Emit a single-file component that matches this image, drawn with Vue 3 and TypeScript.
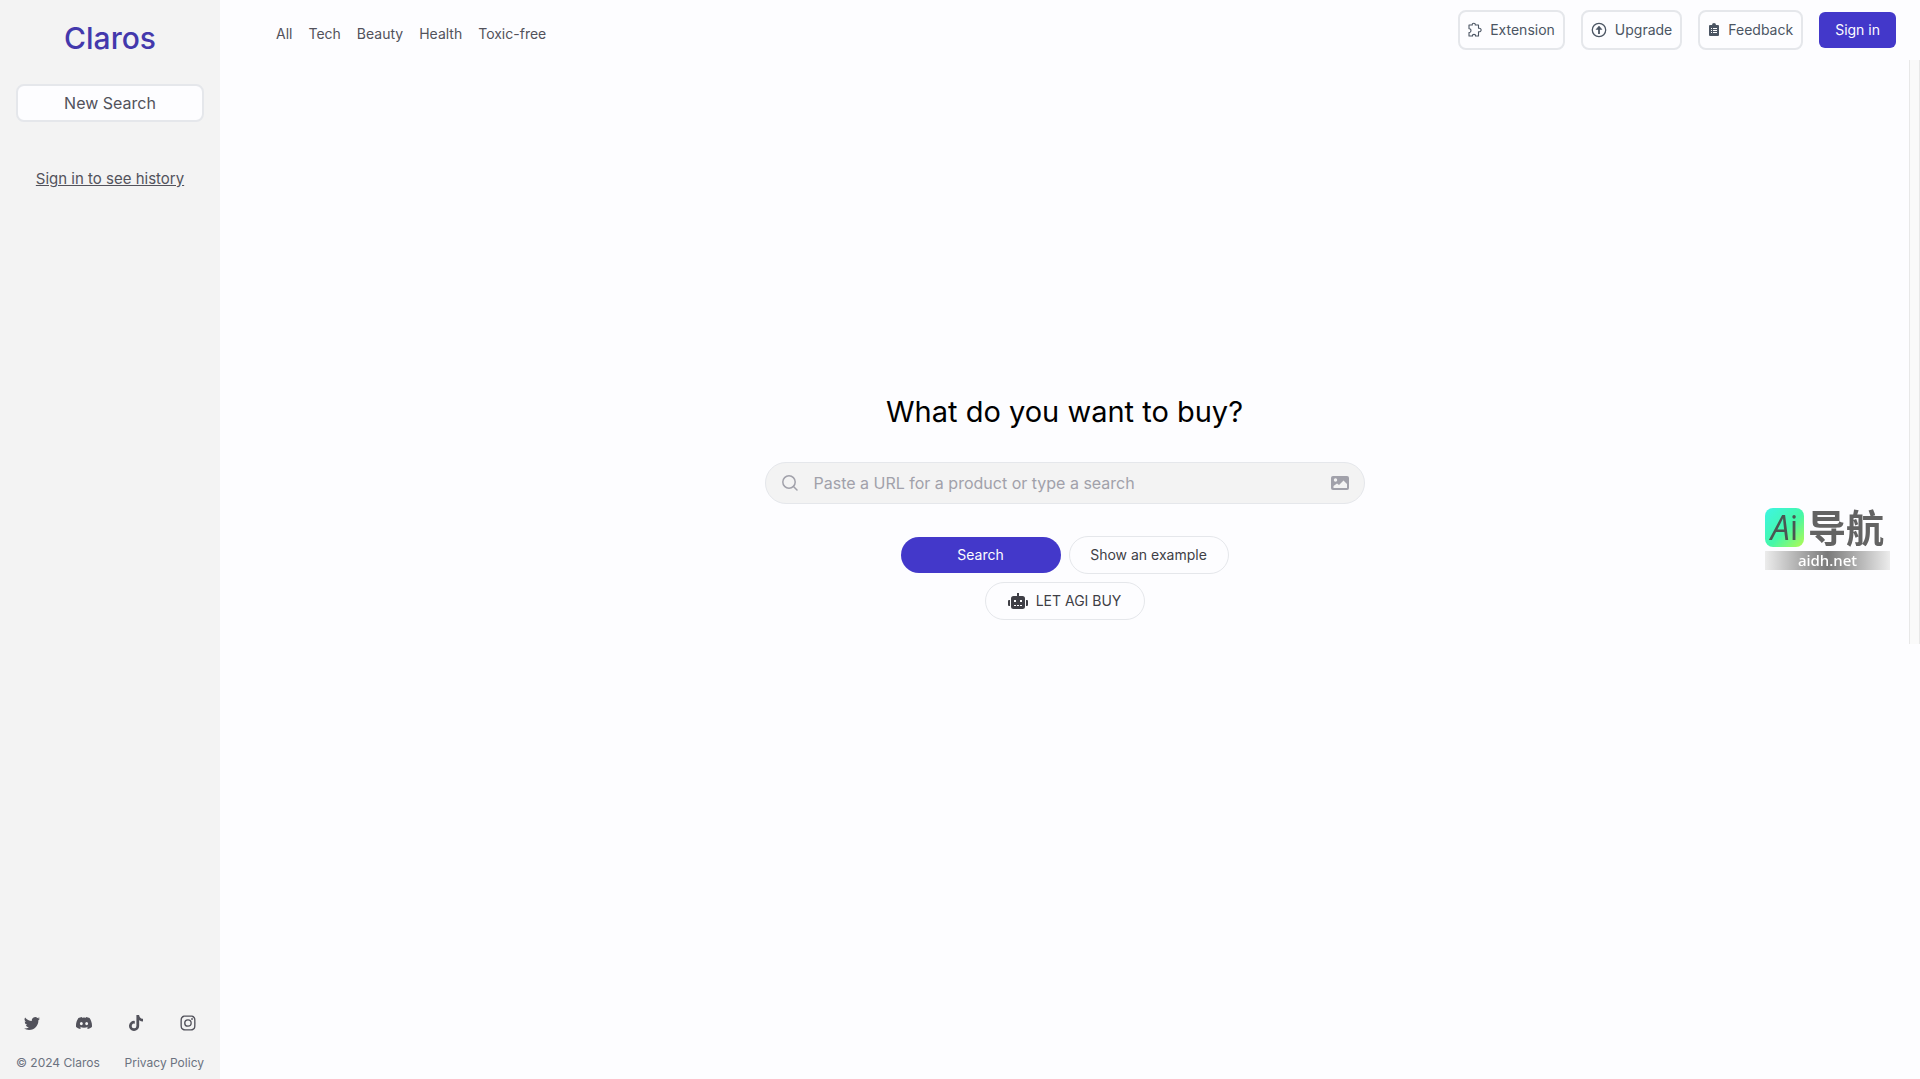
<script setup lang="ts">
import { ref } from 'vue'

const query = ref('')
const categories: string[] = ['All', 'Tech', 'Beauty', 'Health', 'Toxic-free']

interface Social {
  name: string
  box: string
  path: string
}

const socials: Social[] = [
  {
    name: 'Twitter',
    box: '0 0 16 16',
    path: 'M5.026 15c6.038 0 9.341-5.003 9.341-9.334 0-.14 0-.282-.006-.422A6.685 6.685 0 0 0 16 3.542a6.658 6.658 0 0 1-1.889.518 3.301 3.301 0 0 0 1.447-1.817 6.533 6.533 0 0 1-2.087.793A3.286 3.286 0 0 0 7.875 6.03a9.325 9.325 0 0 1-6.767-3.429 3.289 3.289 0 0 0 1.018 4.382A3.323 3.323 0 0 1 .64 6.575v.045a3.288 3.288 0 0 0 2.632 3.218 3.203 3.203 0 0 1-.865.115 3.23 3.23 0 0 1-.614-.057 3.283 3.283 0 0 0 3.067 2.277A6.588 6.588 0 0 1 .78 13.58a6.32 6.32 0 0 1-.78-.045A9.344 9.344 0 0 0 5.026 15z',
  },
  {
    name: 'Discord',
    box: '0 0 16 16',
    path: 'M13.545 2.907a13.227 13.227 0 0 0-3.257-1.011.05.05 0 0 0-.052.025c-.141.25-.297.577-.406.833a12.19 12.19 0 0 0-3.658 0 8.258 8.258 0 0 0-.412-.833.051.051 0 0 0-.052-.025c-1.125.194-2.22.534-3.257 1.011a.041.041 0 0 0-.021.018C.356 6.024-.213 9.047.066 12.032c.001.014.01.028.021.037a13.276 13.276 0 0 0 3.995 2.02.05.05 0 0 0 .056-.019c.308-.42.582-.863.818-1.329a.05.05 0 0 0-.028-.07 8.735 8.735 0 0 1-1.248-.595.05.05 0 0 1-.005-.083c.084-.063.168-.129.248-.195a.05.05 0 0 1 .051-.007c2.619 1.196 5.454 1.196 8.041 0a.052.052 0 0 1 .053.007c.08.066.164.132.248.195a.051.051 0 0 1-.004.085 8.254 8.254 0 0 1-1.249.594.05.05 0 0 0-.027.07c.24.465.515.909.817 1.329a.05.05 0 0 0 .056.019 13.235 13.235 0 0 0 4.001-2.02.049.049 0 0 0 .021-.037c.334-3.451-.559-6.449-2.366-9.106a.034.034 0 0 0-.02-.019zM5.347 10.214c-.789 0-1.438-.724-1.438-1.612 0-.889.637-1.613 1.438-1.613.807 0 1.45.73 1.438 1.613 0 .888-.637 1.612-1.438 1.612zm5.316 0c-.788 0-1.438-.724-1.438-1.612 0-.889.637-1.613 1.438-1.613.807 0 1.451.73 1.438 1.613 0 .888-.631 1.612-1.438 1.612z',
  },
  {
    name: 'TikTok',
    box: '0 0 448 512',
    path: 'M448 209.9a210.1 210.1 0 0 1-122.8-39.3v178.8A162.6 162.6 0 1 1 185 188.3v89.9a74.6 74.6 0 1 0 52.2 71.2V0h88a121.2 121.2 0 0 0 1.9 22.2 122.2 122.2 0 0 0 53.9 80.2 121.4 121.4 0 0 0 67 20.1z',
  },
  {
    name: 'Instagram',
    box: '-0.5 -0.5 17 17',
    path: 'M8 0C5.829 0 5.556.01 4.703.048 3.85.088 3.269.222 2.76.42a3.917 3.917 0 0 0-1.417.923A3.927 3.927 0 0 0 .42 2.76C.222 3.268.087 3.85.048 4.7.01 5.555 0 5.827 0 8.001c0 2.172.01 2.444.048 3.297.04.852.174 1.433.372 1.942.205.526.478.972.923 1.417.444.445.89.719 1.416.923.51.198 1.09.333 1.942.372C5.555 15.99 5.827 16 8 16s2.444-.01 3.298-.048c.851-.04 1.434-.174 1.943-.372a3.916 3.916 0 0 0 1.416-.923c.445-.445.718-.891.923-1.417.197-.509.332-1.09.372-1.942C15.99 10.445 16 10.173 16 8s-.01-2.445-.048-3.299c-.04-.851-.175-1.433-.372-1.941a3.926 3.926 0 0 0-.923-1.417A3.911 3.911 0 0 0 13.24.42c-.51-.198-1.092-.333-1.943-.372C10.443.01 10.172 0 7.998 0h.003zm-.717 1.442h.718c2.136 0 2.389.007 3.232.046.78.035 1.204.166 1.486.275.373.145.64.319.92.599.28.28.453.546.598.92.11.281.24.705.275 1.485.039.843.047 1.096.047 3.231s-.008 2.389-.047 3.232c-.035.78-.166 1.203-.275 1.485a2.47 2.47 0 0 1-.599.919c-.28.28-.546.453-.92.598-.28.11-.704.24-1.485.276-.843.038-1.096.047-3.232.047s-2.39-.009-3.233-.047c-.78-.036-1.203-.166-1.485-.276a2.478 2.478 0 0 1-.92-.598 2.48 2.48 0 0 1-.6-.92c-.109-.281-.24-.705-.275-1.485-.038-.843-.046-1.096-.046-3.233 0-2.136.008-2.388.046-3.231.036-.78.166-1.204.276-1.486.145-.373.319-.64.599-.92.28-.28.546-.453.92-.598.282-.11.705-.24 1.485-.276.738-.034 1.024-.044 2.515-.045v.002zm4.988 1.328a.96.96 0 1 0 0 1.92.96.96 0 0 0 0-1.92zm-4.27 1.122a4.109 4.109 0 1 0 0 8.217 4.109 4.109 0 0 0 0-8.217zm0 1.441a2.667 2.667 0 1 1 0 5.334 2.667 2.667 0 0 1 0-5.334z',
  },
]
</script>

<template>
  <div class="app">
    <aside class="sidebar">
      <a class="brand" href="#">Claros</a>
      <button class="new-search" type="button">New Search</button>
      <a class="history" href="#">Sign in to see history</a>
      <footer class="foot">
        <div class="socials">
          <a v-for="s in socials" :key="s.name" href="#" :aria-label="s.name">
            <svg :viewBox="s.box" width="16" height="16" fill="currentColor"><path :d="s.path" /></svg>
          </a>
        </div>
        <div class="legal">
          <span>© 2024 Claros</span>
          <a href="#">Privacy Policy</a>
        </div>
      </footer>
    </aside>

    <div class="page">
      <header class="topbar">
        <nav class="categories">
          <a v-for="c in categories" :key="c" href="#">{{ c }}</a>
        </nav>
        <div class="actions">
          <button class="action" type="button">
            <svg viewBox="0 0 14 16" width="14" height="16" fill="none" stroke="currentColor" stroke-width="1.1" stroke-linejoin="round">
              <path d="M1 3H4.300C3.700 .7 7.800 .7 7.200 3H10.500V6.300C14 5.500 14 10.500 10.500 9.700V14H7.500C8 11.800 4 11.800 4.500 14H1V10.500C3.600 10.800 3.600 6.400 1 6.700Z" />
            </svg>
            Extension
          </button>
          <button class="action" type="button">
            <svg viewBox="0 0 16 16" width="16" height="16" fill="none" stroke="currentColor" stroke-width="1.300">
              <circle cx="8" cy="8" r="6.700" />
              <path d="M8 12V6" stroke-width="1.800" />
              <path d="M8 4L11 7.500H5Z" fill="currentColor" stroke-width=".5" />
            </svg>
            Upgrade
          </button>
          <button class="action" type="button">
            <svg viewBox="0 0 12 16" width="12" height="16">
              <path fill="currentColor" d="M2 3H4a2 2 0 0 1 4 0h2q1 0 1 1v9q0 1-1 1H2q-1 0-1-1V4q0-1 1-1z" />
              <path stroke="#fdfdff" d="M3 6.500h1M5 6.500h4M3 8.500h1M5 8.500h4M3 10.500h1M5 10.500h4" />
            </svg>
            Feedback
          </button>
          <button class="sign-in" type="button">Sign in</button>
        </div>
      </header>

      <div class="body">
        <main class="hero">
          <h1>What do you want to buy?</h1>
          <form @submit.prevent>
            <div class="field">
              <svg viewBox="0 0 16 16" width="16" height="16" fill="none" stroke="currentColor" stroke-width="1.500" stroke-linecap="round">
                <circle cx="7" cy="7" r="6.200" />
                <path d="M11.500 11.500L15 15" />
              </svg>
              <input v-model="query" type="text" aria-label="Product search" placeholder="Paste a URL for a product or type a search" />
              <button class="image" type="button" aria-label="Search by image">
                <svg viewBox="0 0 18 14" width="18" height="14">
                  <rect width="18" height="14" rx="2" fill="currentColor" />
                  <circle cx="4.500" cy="4" r="1.700" fill="#f3f3f3" />
                  <path d="M2.500 12V10L6 7.500L8 9L12.500 4.500L16 8V12Z" fill="#f3f3f3" />
                </svg>
              </button>
            </div>
            <div class="choices">
              <button class="pill primary" type="submit">Search</button>
              <button class="pill" type="button">Show an example</button>
              <button class="pill" type="button">
                <svg viewBox="0 0 20 16" width="20" height="16">
                  <path fill="currentColor" d="M9 0h2v3h3.500q2.500 0 2.500 2.500V13.500q0 2.500-2.500 2.500h-9q-2.500 0-2.500-2.500V5.500Q3 3 5.500 3H9zM2 7v6H1q-1 0-1-1V8q0-1 1-1zM18 7h1q1 0 1 1v4q0 1-1 1h-1z" />
                  <path fill="#fdfdff" d="M6 7h2v2H6zM12 7h2v2h-2zM6 12h2v1H6zM9 12h2v1H9zM12 12h2v1h-2z" />
                </svg>
                LET AGI BUY
              </button>
            </div>
          </form>
        </main>
        <div class="track"></div>
      </div>
    </div>

    <div class="badge">
      <div class="badge-top">
        <span class="tile"><i>A</i>i</span>
        <span class="hanzi">导航</span>
      </div>
      <div class="domain">aidh.net</div>
    </div>
  </div>
</template>

<style>
body {
  margin: 0;
  background: #fdfdff;
}
</style>

<style scoped>
.app {
  display: flex;
  min-height: 100vh;
  font-family: Inter, "Noto Sans CJK SC", sans-serif;
  font-size: 14px;
  line-height: 20px;
  color: #52525b;
}
.app * {
  box-sizing: border-box;
}
a {
  color: inherit;
  text-decoration: none;
}
button {
  font: inherit;
  color: inherit;
  cursor: pointer;
}
svg {
  display: block;
  flex: none;
}
.sidebar {
  display: flex;
  flex-direction: column;
  width: 220px;
  flex: none;
  padding: 16px 16px 6px;
  background: #f3f3f3;
}
.brand {
  align-self: center;
  font-size: 30px;
  line-height: 44px;
  font-weight: 500;
  color: #4338ac;
}
.new-search {
  height: 38px;
  margin-top: 24px;
  border: 2px solid #e5e7eb;
  border-radius: 8px;
  background: #fdfdff;
  font-size: 16px;
}
.history {
  align-self: center;
  margin-top: 46px;
  font-size: 15px;
  line-height: 22px;
  text-decoration: underline;
}
.foot {
  margin-top: auto;
}
.socials {
  display: flex;
  justify-content: space-between;
  padding: 0 8px;
}
.legal {
  display: flex;
  justify-content: space-between;
  margin-top: 22px;
  font-size: 12px;
  line-height: 20px;
  color: #6b7280;
}
.page {
  display: flex;
  flex-direction: column;
  flex: 1;
  min-width: 0;
}
.topbar {
  display: flex;
  align-items: center;
  justify-content: space-between;
  height: 60px;
  padding: 0 24px 0 56px;
}
.categories {
  display: flex;
  gap: 16px;
  padding-top: 8px;
}
.actions {
  display: flex;
  align-items: center;
  gap: 16px;
}
.action {
  display: flex;
  align-items: center;
  gap: 8px;
  height: 40px;
  padding: 0 8px;
  border: 2px solid #e5e7eb;
  border-radius: 8px;
  background: #fdfdff;
  color: #4b5563;
}
.sign-in {
  height: 36px;
  padding: 0 16px;
  border: 0;
  border-radius: 6px;
  background: #4338ca;
  color: #fdfdff;
}
.body {
  display: flex;
  align-items: flex-start;
}
.hero {
  flex: 1;
  padding-top: 332px;
}
h1 {
  margin: 0;
  font-size: 29px;
  line-height: 40px;
  font-weight: 400;
  text-align: center;
  color: #000;
}
form {
  width: 600px;
  max-width: 100%;
  margin: 30px auto 0;
}
.field {
  display: flex;
  align-items: center;
  gap: 16px;
  height: 42px;
  padding: 0 15px 0 16px;
  border: 1px solid #e5e7eb;
  border-radius: 21px;
  background: #f3f3f3;
  color: #a1a1aa;
}
.field input {
  flex: 1;
  min-width: 0;
  padding: 0;
  border: 0;
  outline: 0;
  background: none;
  font: inherit;
  font-size: 16px;
  color: #3f3f46;
}
.field input::placeholder {
  color: #a1a1aa;
}
.image {
  padding: 0;
  border: 0;
  background: none;
}
.choices {
  display: flex;
  flex-wrap: wrap;
  align-items: center;
  justify-content: center;
  gap: 8px;
  width: 360px;
  margin: 32px auto 0;
}
.pill {
  display: flex;
  align-items: center;
  justify-content: center;
  gap: 8px;
  width: 160px;
  height: 38px;
  padding: 0;
  border: 1px solid #e5e7eb;
  border-radius: 19px;
  background: #fdfdff;
  color: #3f3f46;
}
.primary {
  height: 36px;
  border: 0;
  background: #4338ca;
  color: #fdfdff;
}
.track {
  width: 11px;
  height: 584px;
  border: solid #e8e8e8;
  border-width: 0 1px;
  background: #fafafa;
}
.badge {
  position: fixed;
  top: 508px;
  right: 30px;
  width: 125px;
}
.badge-top {
  display: flex;
  align-items: flex-start;
  gap: 4px;
  height: 39px;
}
.tile {
  width: 39px;
  height: 39px;
  border-radius: 8px;
  background: linear-gradient(135deg, #3df5e4, #45f7a8 55%, #b4fb50);
  font-family: "Open Sans", sans-serif;
  font-size: 34px;
  line-height: 38px;
  font-weight: 500;
  text-align: center;
  color: #4a5552;
}
.hanzi {
  font-family: "Noto Sans CJK SC", sans-serif;
  font-size: 38px;
  line-height: 36px;
  font-weight: 700;
  color: #636363;
  white-space: nowrap;
}
.domain {
  height: 19px;
  margin-top: 4px;
  background: linear-gradient(90deg, #ececec, #7a7a7a 50%, #ececec);
  font-family: "Noto Sans", sans-serif;
  font-size: 15px;
  line-height: 19px;
  font-weight: 500;
  text-align: center;
  color: #fff;
}
</style>
